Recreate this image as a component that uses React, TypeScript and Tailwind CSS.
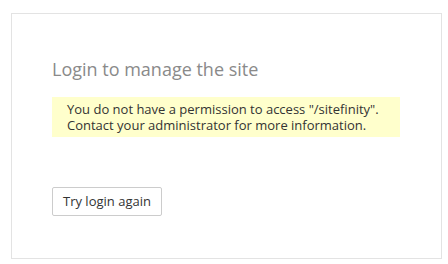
export default function App() {
	return (
		<div
			className="h-[264px] w-[448px] bg-white pt-[13px] pl-[11px]"
			style={{ fontFamily: '"Open Sans", "Liberation Sans", sans-serif' }}
		>
			<div className="h-[246px] w-[431px] border border-[#e3e3e3] bg-white pt-[43px] pl-[40px]">
				<h1 className="text-[18px] leading-[24px] text-[#8a8a8a]">
					Login to manage the site
				</h1>
				<div className="mt-[16px] w-[348px] bg-[#ffffcc] py-[4px] pl-[15px] text-[13px] leading-[16px] text-[#333]">
					<p>You do not have a permission to access "/sitefinity".</p>
					<p>Contact your administrator for more information.</p>
				</div>
				<button
					className="mt-[50px] h-[29px] rounded-[2px] border border-[#cccccc] bg-white px-[10px] text-[13px] text-[#333]"
					type="button"
				>
					Try login again
				</button>
			</div>
		</div>
	);
}
